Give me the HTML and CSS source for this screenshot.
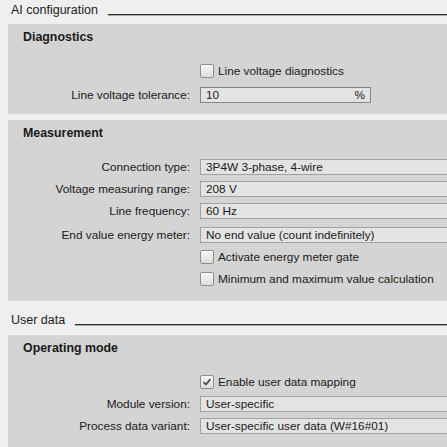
FILE: index.html
```html
<!DOCTYPE html>
<html>
<head>
<meta charset="utf-8">
<link rel="stylesheet" href="styles.css">
</head>
<body>
<div class="page">
  <div class="group-title first"><span class="gt-text">AI configuration</span><span class="rule"></span></div>
  <section class="panel diag">
    <h2>Diagnostics</h2>
    <div class="rows">
      <div class="row"><div class="label"></div><div class="check"><span class="box"></span><span>Line voltage diagnostics</span></div></div>
      <div class="row"><div class="label">Line voltage tolerance:</div><div class="field short strong"><span>10</span><span class="unit">%</span></div></div>
    </div>
  </section>
  <div class="sep"></div>
  <section class="panel meas">
    <h2>Measurement</h2>
    <div class="rows">
      <div class="row"><div class="label">Connection type:</div><div class="field wide"><span>3P4W 3-phase, 4-wire</span></div></div>
      <div class="row"><div class="label">Voltage measuring range:</div><div class="field wide"><span>208 V</span></div></div>
      <div class="row"><div class="label">Line frequency:</div><div class="field wide"><span>60 Hz</span></div></div>
      <div class="row spaced"><div class="label">End value energy meter:</div><div class="field wide"><span>No end value (count indefinitely)</span></div></div>
      <div class="row"><div class="label"></div><div class="check"><span class="box"></span><span>Activate energy meter gate</span></div></div>
      <div class="row"><div class="label"></div><div class="check"><span class="box"></span><span>Minimum and maximum value calculation</span></div></div>
    </div>
  </section>
  <div class="group-title second"><span class="gt-text">User data</span><span class="rule"></span></div>
  <section class="panel op">
    <h2>Operating mode</h2>
    <div class="rows">
      <div class="row"><div class="label"></div><div class="check"><span class="box checked"><svg viewBox="0 0 14 14" width="12" height="12"><path d="M3 7.2 L5.8 10 L11 3.6" fill="none" stroke="#4a4a4a" stroke-width="2"/></svg></span><span>Enable user data mapping</span></div></div>
      <div class="row"><div class="label">Module version:</div><div class="field wide"><span>User-specific</span></div></div>
      <div class="row"><div class="label">Process data variant:</div><div class="field wide"><span>User-specific user data (W#16#01)</span></div></div>
    </div>
  </section>
</div>
</body>
</html>
```

FILE: styles.css
```css
html, body {
  margin: 0;
  padding: 0;
  background: #efefef;
  overflow: hidden;
}
.page {
  width: 447px;
  height: 447px;
  overflow: hidden;
  font-family: "Liberation Sans", Arial, sans-serif;
  font-size: 11.8px;
  color: #1a1a1a;
}
.group-title {
  display: flex;
  align-items: flex-start;
  padding-left: 11px;
  box-sizing: border-box;
}
.group-title.first {
  height: 24px;
  padding-top: 2px;
}
.group-title.second {
  height: 34px;
  padding-top: 11px;
}
.gt-text {
  font-size: 12.5px;
  line-height: 16px;
  color: #1a1a1a;
}
.rule {
  flex: 1;
  height: 1px;
  margin-top: 12px;
  margin-left: 10px;
  background: #2e2e2e;
  box-shadow: 0 1px 0 #a8a8a8;
}
.panel {
  margin-left: 8px;
  background: #d4d4d4;
}
.panel h2 {
  margin: 0;
  height: 24px;
  line-height: 26px;
  padding-left: 15px;
  font-size: 12.4px;
  font-weight: bold;
  color: #1a1a1a;
}
.rows {
  display: flex;
  flex-direction: column;
  margin-top: 12px;
}
.diag .rows { gap: 2px; }
.diag { padding-bottom: 8px; }
.meas { padding-bottom: 11px; }
.op { padding-bottom: 10px; }
.sep { height: 6px; }
.row {
  display: flex;
  align-items: center;
  height: 22px;
  gap: 10px;
}
.row.spaced { margin-top: 2px; }
.label {
  width: 182px;
  flex: none;
  text-align: right;
  white-space: nowrap;
}
.field {
  box-sizing: border-box;
  height: 16px;
  line-height: 14px;
  border: 1px solid #a2a2a2;
  background: #e3e3e3;
  padding: 0 5px;
  display: flex;
  justify-content: space-between;
  white-space: nowrap;
  flex: none;
}
.field.wide { width: 270px; }
.field.short { width: 171px; }
.field.strong { border-color: #858585; }
.check {
  display: flex;
  align-items: center;
  gap: 4px;
  white-space: nowrap;
}
.box {
  box-sizing: border-box;
  width: 14px;
  height: 14px;
  border: 1px solid #8e8e8e;
  border-radius: 2px;
  background: linear-gradient(#f8f8f8, #dcdcdc);
  display: flex;
  align-items: center;
  justify-content: center;
}
```
